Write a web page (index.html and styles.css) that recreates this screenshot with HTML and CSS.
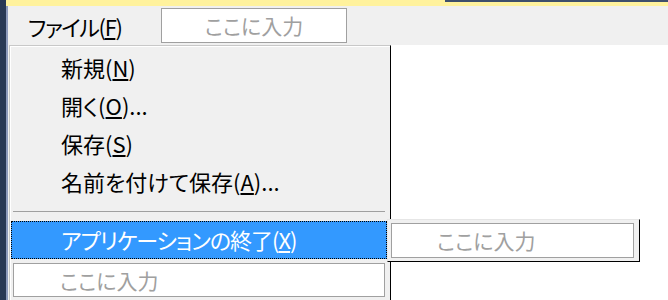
FILE: index.html
```html
<!DOCTYPE html>
<html lang="ja">
<head>
    <meta charset="UTF-8">
    <title>メニュー デザイナー</title>
    <link rel="stylesheet" href="styles.css">
</head>
<body>
    <div class="ide">
        <div class="side"></div>
        <div class="main">
            <div class="tabline">
                <div class="tab-active"></div>
                <div class="tab-rest"></div>
            </div>
            <div class="surface">
                <div class="edge"></div>
                <div class="designer">
                    <div class="menubar">
                        <span class="menu-title">ファイル(<u>F</u>)</span>
                        <div class="type-here bar-input">ここに入力</div>
                    </div>
                    <div class="drop-area">
                        <div class="gutter"></div>
                        <div class="dropdown">
                            <div class="item">新規(<u>N</u>)</div>
                            <div class="item">開く(<u>O</u>)...</div>
                            <div class="item">保存(<u>S</u>)</div>
                            <div class="item">名前を付けて保存(<u>A</u>)...</div>
                            <div class="sep"></div>
                            <div class="item selected">アプリケーションの終了(<u>X</u>)
                                <div class="submenu">
                                    <div class="type-here sub-input">ここに入力</div>
                                </div>
                            </div>
                            <div class="type-here new-item">ここに入力</div>
                        </div>
                    </div>
                </div>
            </div>
        </div>
    </div>
</body>
</html>
```
FILE: styles.css
```css
body {
    margin: 0;
    background: #ffffff;
    font-family: "Noto Sans CJK JP", "Noto Sans", sans-serif;
    font-size: 22px;
    font-feature-settings: "palt";
    color: #000000;
    overflow: hidden;
}
.ide {
    display: flex;
    height: 300px;
    overflow: hidden;
}
.side {
    width: 6px;
    flex: none;
    background: #293955;
}
.main {
    flex: 1;
    display: flex;
    flex-direction: column;
    min-height: 0;
}
.tabline {
    flex: none;
    display: flex;
    height: 6px;
}
.tab-active {
    width: 439px;
    background: #fff29d;
}
.tab-rest {
    flex: 1;
    background: #fff29d;
    border-top: 2px solid #3e4f6b;
}
.surface {
    flex: 1;
    display: flex;
    min-height: 0;
}
.edge {
    width: 2px;
    flex: none;
    background: #8e9bbc;
}
.designer {
    flex: 1;
    display: flex;
    flex-direction: column;
    min-height: 0;
    background: #ffffff;
}
.menubar {
    flex: none;
    display: flex;
    align-items: center;
    height: 39px;
    background: #f0f0f0;
}
.menu-title {
    box-sizing: border-box;
    width: 153px;
    padding-left: 20px;
    line-height: 38px;
    letter-spacing: -1.4px;
}
.type-here {
    box-sizing: border-box;
    background: #ffffff;
    border: 1px solid #a0a0a0;
    color: #a0a0a0;
    font-size: 21px;
    padding-left: 45px;
}
.bar-input {
    width: 186px;
    height: 35px;
    line-height: 33px;
    padding-left: 0;
    text-align: center;
}
.drop-area {
    flex: 1;
    display: flex;
    align-items: flex-start;
    min-height: 0;
}
.gutter {
    width: 1px;
    align-self: stretch;
    background: #f0f0f0;
}
.dropdown {
    flex: none;
    box-sizing: border-box;
    width: 382px;
    height: 270px;
    padding-top: 3px;
    background: #f0f0f0;
    border-left: 1px solid #c8c8c8;
    border-top: 1px solid #c8c8c8;
    border-right: 1px solid #000000;
    box-shadow: inset 1px 1px 0 #ffffff;
}
.item {
    height: 38px;
    line-height: 37px;
    padding-left: 51px;
    white-space: nowrap;
}
.sep {
    height: 1px;
    margin: 10px 5px 9px 3px;
    background: #a0a0a0;
}
.selected {
    position: relative;
    box-sizing: border-box;
    width: 376px;
    margin-left: 1px;
    padding-left: 49px;
    line-height: 35px;
    letter-spacing: -1px;
    background: #3399ff;
    color: #ffffff;
    border: 1px dotted #000000;
}
.submenu {
    position: absolute;
    left: 375px;
    top: -3px;
    box-sizing: border-box;
    width: 253px;
    height: 43px;
    padding: 3px 0 0 3px;
    letter-spacing: 0;
    background: #f0f0f0;
    border: 1px solid #e6e6e6;
    border-right-color: #000000;
    border-bottom-color: #000000;
}
.sub-input {
    width: 243px;
    height: 35px;
    line-height: 33px;
}
.new-item {
    width: 372px;
    height: 34px;
    line-height: 32px;
    margin: 4px 0 0 3px;
    padding-left: 46px;
}
```
